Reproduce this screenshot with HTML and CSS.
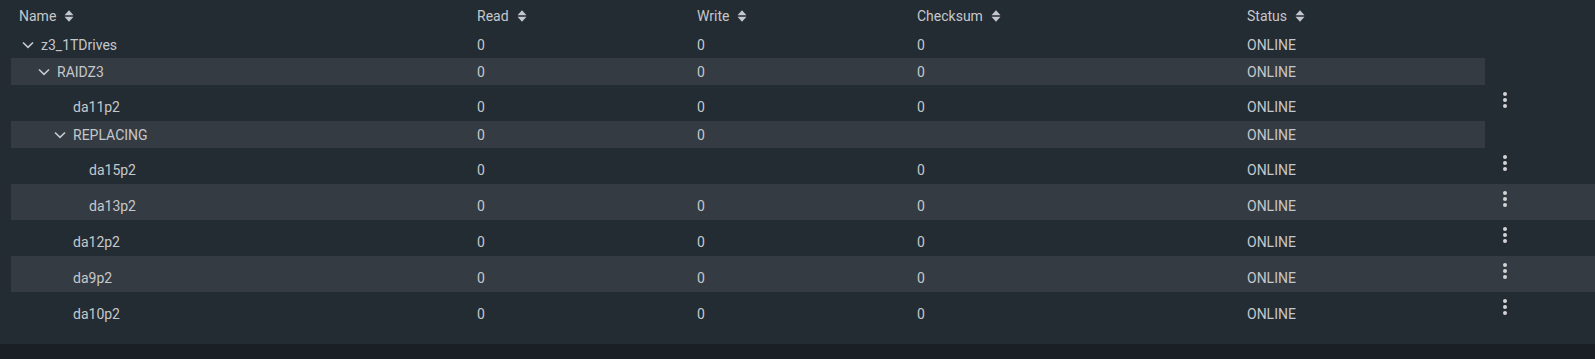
FILE: index.html
```html
<!DOCTYPE html>
<html lang="en">
<head>
    <meta charset="UTF-8">
    <title>Pool Status</title>
    <link rel="stylesheet" href="styles.css">
</head>
<body>
    <div class="page">
        <div class="table">
            <div class="row head">
                <div class="cell name">Name <svg class="sort" width="10" height="12" viewBox="0 0 10 12"><polygon points="0.5,5.2 5,0.3 9.5,5.2"/><polygon points="0.5,6.8 5,11.7 9.5,6.8"/></svg></div>
                <div class="cell">Read <svg class="sort" width="10" height="12" viewBox="0 0 10 12"><polygon points="0.5,5.2 5,0.3 9.5,5.2"/><polygon points="0.5,6.8 5,11.7 9.5,6.8"/></svg></div>
                <div class="cell">Write <svg class="sort" width="10" height="12" viewBox="0 0 10 12"><polygon points="0.5,5.2 5,0.3 9.5,5.2"/><polygon points="0.5,6.8 5,11.7 9.5,6.8"/></svg></div>
                <div class="cell">Checksum <svg class="sort" width="10" height="12" viewBox="0 0 10 12"><polygon points="0.5,5.2 5,0.3 9.5,5.2"/><polygon points="0.5,6.8 5,11.7 9.5,6.8"/></svg></div>
                <div class="cell">Status <svg class="sort" width="10" height="12" viewBox="0 0 10 12"><polygon points="0.5,5.2 5,0.3 9.5,5.2"/><polygon points="0.5,6.8 5,11.7 9.5,6.8"/></svg></div>
                <div class="cell"></div>
            </div>

            <div class="row group">
                <div class="cell name lvl-0"><span class="toggle"><svg width="12" height="8" viewBox="0 0 12 8"><polyline points="1,1.5 6,6.3 11,1.5"/></svg></span>z3_1TDrives</div>
                <div class="cell">0</div>
                <div class="cell">0</div>
                <div class="cell">0</div>
                <div class="cell">ONLINE</div>
            </div>

            <div class="row group stripe">
                <div class="cell name lvl-1"><span class="toggle"><svg width="12" height="8" viewBox="0 0 12 8"><polyline points="1,1.5 6,6.3 11,1.5"/></svg></span>RAIDZ3</div>
                <div class="cell">0</div>
                <div class="cell">0</div>
                <div class="cell">0</div>
                <div class="cell">ONLINE</div>
            </div>

            <div class="row leaf">
                <div class="cell name lvl-2"><span class="toggle"></span>da11p2</div>
                <div class="cell">0</div>
                <div class="cell">0</div>
                <div class="cell">0</div>
                <div class="cell">ONLINE</div>
                <div class="cell actions"><svg width="24" height="24" viewBox="0 0 24 24"><circle cx="12" cy="6" r="2"/><circle cx="12" cy="12" r="2"/><circle cx="12" cy="18" r="2"/></svg></div>
            </div>

            <div class="row group stripe">
                <div class="cell name lvl-2"><span class="toggle"><svg width="12" height="8" viewBox="0 0 12 8"><polyline points="1,1.5 6,6.3 11,1.5"/></svg></span>REPLACING</div>
                <div class="cell">0</div>
                <div class="cell">0</div>
                <div class="cell"></div>
                <div class="cell">ONLINE</div>
            </div>

            <div class="row leaf">
                <div class="cell name lvl-3"><span class="toggle"></span>da15p2</div>
                <div class="cell">0</div>
                <div class="cell"></div>
                <div class="cell">0</div>
                <div class="cell">ONLINE</div>
                <div class="cell actions"><svg width="24" height="24" viewBox="0 0 24 24"><circle cx="12" cy="6" r="2"/><circle cx="12" cy="12" r="2"/><circle cx="12" cy="18" r="2"/></svg></div>
            </div>

            <div class="row leaf stripe">
                <div class="cell name lvl-3"><span class="toggle"></span>da13p2</div>
                <div class="cell">0</div>
                <div class="cell">0</div>
                <div class="cell">0</div>
                <div class="cell">ONLINE</div>
                <div class="cell actions"><svg width="24" height="24" viewBox="0 0 24 24"><circle cx="12" cy="6" r="2"/><circle cx="12" cy="12" r="2"/><circle cx="12" cy="18" r="2"/></svg></div>
            </div>

            <div class="row leaf">
                <div class="cell name lvl-2"><span class="toggle"></span>da12p2</div>
                <div class="cell">0</div>
                <div class="cell">0</div>
                <div class="cell">0</div>
                <div class="cell">ONLINE</div>
                <div class="cell actions"><svg width="24" height="24" viewBox="0 0 24 24"><circle cx="12" cy="6" r="2"/><circle cx="12" cy="12" r="2"/><circle cx="12" cy="18" r="2"/></svg></div>
            </div>

            <div class="row leaf stripe">
                <div class="cell name lvl-2"><span class="toggle"></span>da9p2</div>
                <div class="cell">0</div>
                <div class="cell">0</div>
                <div class="cell">0</div>
                <div class="cell">ONLINE</div>
                <div class="cell actions"><svg width="24" height="24" viewBox="0 0 24 24"><circle cx="12" cy="6" r="2"/><circle cx="12" cy="12" r="2"/><circle cx="12" cy="18" r="2"/></svg></div>
            </div>

            <div class="row leaf">
                <div class="cell name lvl-2"><span class="toggle"></span>da10p2</div>
                <div class="cell">0</div>
                <div class="cell">0</div>
                <div class="cell">0</div>
                <div class="cell">ONLINE</div>
                <div class="cell actions"><svg width="24" height="24" viewBox="0 0 24 24"><circle cx="12" cy="6" r="2"/><circle cx="12" cy="12" r="2"/><circle cx="12" cy="18" r="2"/></svg></div>
            </div>
        </div>
    </div>
    <div class="footer"></div>
</body>
</html>
```

FILE: styles.css
```css
body {
    margin: 0;
    background: #232b33;
    font-family: Roboto, "Liberation Sans", sans-serif;
    font-size: 14px;
    color: #c5c8cb;
}
.page {
    height: 344px;
    padding-left: 11px;
    box-sizing: border-box;
}
.table {
    width: 1584px;
}
.row {
    display: grid;
    grid-template-columns: 458px 220px 220px 330px 246px 110px;
    height: 36px;
}
.row.head {
    height: 31px;
}
.row.group {
    grid-template-columns: 458px 220px 220px 330px 246px;
    width: 1474px;
    height: 27px;
}
.stripe {
    background: #353b42;
}
.cell {
    display: flex;
    align-items: center;
    padding-left: 8px;
    line-height: 14px;
    white-space: nowrap;
}
.leaf .cell {
    align-items: flex-start;
    padding-top: 15px;
}
.leaf .cell.actions {
    padding-top: 3px;
}
.sort {
    margin-left: 8px;
    fill: #c5c8cb;
}
.toggle {
    display: inline-flex;
    justify-content: center;
    width: 17px;
    margin-right: 5px;
}
.toggle polyline {
    fill: none;
    stroke: #c5c8cb;
    stroke-width: 1.7;
}
.lvl-1 { padding-left: 24px; }
.lvl-2 { padding-left: 40px; }
.lvl-3 { padding-left: 56px; }
.actions svg {
    fill: #d2d4d6;
}
.footer {
    height: 15px;
    background: #1a1f25;
}
```
